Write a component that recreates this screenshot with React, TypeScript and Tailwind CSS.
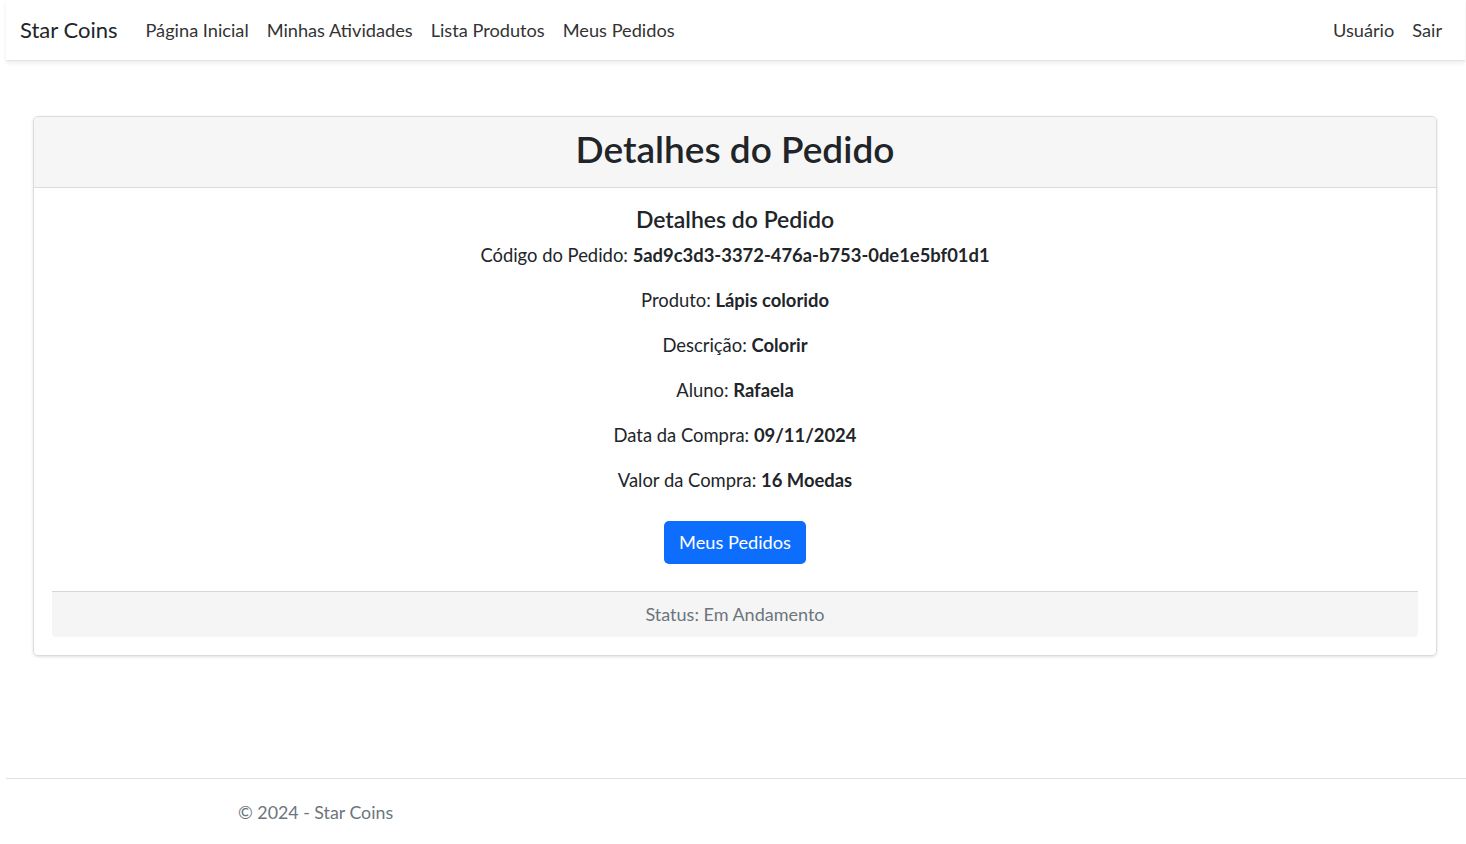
const font = { fontFamily: "Lato, 'Noto Sans', sans-serif" };

const navLinks = ["Página Inicial", "Minhas Atividades", "Lista Produtos", "Meus Pedidos"];

const rows = [
  { label: "Produto:", value: "Lápis colorido" },
  { label: "Descrição:", value: "Colorir" },
  { label: "Aluno:", value: "Rafaela" },
  { label: "Data da Compra:", value: "09/11/2024" },
  { label: "Valor da Compra:", value: "16 Moedas" },
];

export default function App() {
  return (
    <div className="min-h-[844px] bg-white text-[#212529]" style={font}>
      {/* Navbar */}
      <nav className="ml-[6px] mr-px h-[61px] flex items-center justify-between bg-white shadow-[0_2px_4px_rgba(0,0,0,0.08)] border-b border-[#e5e5e5] pl-[14px] pr-[23px]">
        <div className="flex items-center">
          <span className="text-[22px] leading-[28px] text-[#212529] mr-[19px]">Star Coins</span>
          {navLinks.map((l) => (
            <a key={l} className="px-[9px] text-[18.2px] leading-[28px] text-[#333]">
              {l}
            </a>
          ))}
        </div>
        <div className="flex items-center gap-[18px] text-[18.2px] leading-[28px] text-[#333]">
          <a>Usuário</a>
          <a>Sair</a>
        </div>
      </nav>

      {/* Card */}
      <main className="ml-[33px] mr-[29px] mt-[55px]">
        <div className="border border-[#dcdcdc] rounded-[5px] shadow-[0_1px_3px_rgba(0,0,0,0.12)] overflow-hidden">
          <div className="h-[71px] pb-[8px] bg-[#f6f6f6] border-b border-[#dcdcdc] flex items-center justify-center">
            <h1 className="text-[37px] font-semibold leading-none">Detalhes do Pedido</h1>
          </div>
          <div className="pt-[17px] pb-[18px] px-[18px] flex flex-col items-center">
            <h4 className="text-[23px] font-semibold leading-[29px]">Detalhes do Pedido</h4>
            <p className="mt-[9px] text-[18.4px] leading-[24px]">
              Código do Pedido: <b className="font-bold">5ad9c3d3-3372-476a-b753-0de1e5bf01d1</b>
            </p>
            {rows.map((r) => (
              <p key={r.label} className="mt-[21px] text-[18.4px] leading-[24px]">
                {r.label} <b className="font-bold">{r.value}</b>
              </p>
            ))}
            <button className="mt-[29px] h-[43px] px-[15px] bg-[#0d6efd] text-white text-[18.2px] rounded-[5px]">
              Meus Pedidos
            </button>
            <div className="mt-[27px] w-full h-[46px] bg-[#f5f5f5] border-t border-[#d6d6d6] rounded-b-[4px] flex items-center justify-center text-[18px] text-[#6c757d]">
              Status: Em Andamento
            </div>
          </div>
        </div>
      </main>

      {/* Footer */}
      <footer className="ml-[6px] mt-[122px] border-t border-[#e0e0e0] h-[68px] flex items-center pl-[232px] text-[17.8px] text-[#6c757d]">
        © 2024 - Star Coins
      </footer>
    </div>
  );
}
